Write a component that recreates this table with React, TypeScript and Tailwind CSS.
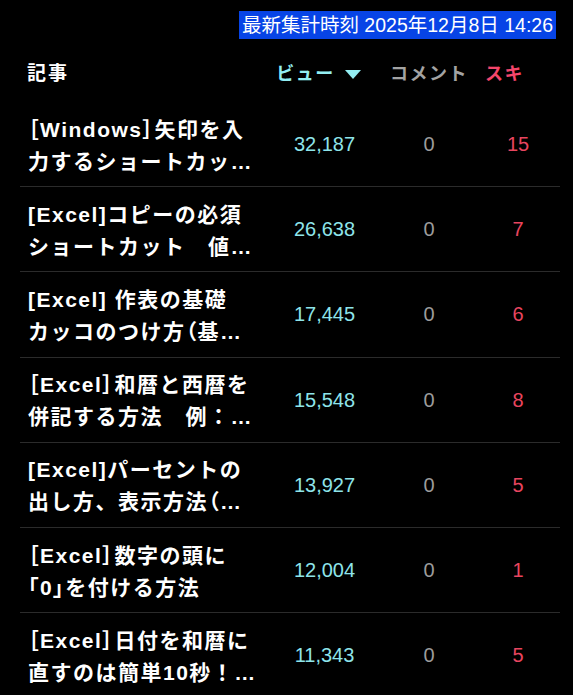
import React from 'react';

interface Row {
  lines: [string, string];
  views: string;
  comments: string;
  likes: string;
}

const rows: Row[] = [
  { lines: ['［Windows］矢印を入', '力するショートカッ…'], views: '32,187', comments: '0', likes: '15' },
  { lines: ['[Excel]コピーの必須', 'ショートカット　値…'], views: '26,638', comments: '0', likes: '7' },
  { lines: ['[Excel] 作表の基礎', 'カッコのつけ方（基…'], views: '17,445', comments: '0', likes: '6' },
  { lines: ['［Excel］和暦と西暦を', '併記する方法　例：…'], views: '15,548', comments: '0', likes: '8' },
  { lines: ['[Excel]パーセントの', '出し方、表示方法（…'], views: '13,927', comments: '0', likes: '5' },
  { lines: ['［Excel］数字の頭に', '「0」を付ける方法'], views: '12,004', comments: '0', likes: '1' },
  { lines: ['［Excel］日付を和暦に', '直すのは簡単10秒！…'], views: '11,343', comments: '0', likes: '5' },
];

// brackets are set proportional, like the original page
const Line = ({ text }: { text: string }) => {
  const parts = text.split(/([［］「」（）])/);
  return (
    <span className="block whitespace-nowrap">
      {parts.map((p, i) =>
        /^[［］「」（）]$/.test(p) ? (
          <span key={i} className="[font-feature-settings:'palt']">
            {p}
          </span>
        ) : (
          <React.Fragment key={i}>{p}</React.Fragment>
        )
      )}
    </span>
  );
};

export default function App() {
  return (
    <div className="min-h-screen bg-black text-white font-['Liberation_Sans','Noto_Sans_CJK_JP',sans-serif]">
      <div className="flex justify-end pt-[11px] pr-[17px]">
        <div className="h-[28px] bg-[#0744e6] px-[3px] text-[19.5px] leading-[28px] text-white">
          最新集計時刻 2025年12月8日 14:26
        </div>
      </div>

      <div className="ml-[20px] w-[540px]">
        <div className="flex h-[63px] items-center pt-[8px] text-[18px] font-bold tracking-[1.5px]">
          <div className="w-[255px] pl-[7px] text-[19px] tracking-[2px]">記事</div>
          <div className="flex w-[99px] items-center justify-center pr-[12px] text-[#93eef2]">
            <span>ビュー</span>
            <svg className="ml-[10px]" width="16" height="9" viewBox="0 0 16 9">
              <path d="M0 0 H16 L8 9 Z" fill="#93eef2" />
            </svg>
          </div>
          <div className="w-[110px] text-center text-[#a3a3a3]">コメント</div>
          <div className="w-[68px] pr-[27px] text-center text-[#f4466b]">スキ</div>
        </div>

        {rows.map((r) => (
          <div
            key={r.views}
            className="flex h-[85.2px] items-center border-b border-[#2b2b2b]"
          >
            <div className="w-[255px] pl-[8px] pt-[3px] text-[21px] font-bold leading-[32px] tracking-[1.5px]">
              <Line text={r.lines[0]} />
              <Line text={r.lines[1]} />
            </div>
            <div className="w-[99px] text-center text-[20px] text-[#8ee4ea]">{r.views}</div>
            <div className="w-[110px] text-center text-[20px] text-[#9c9c9c]">{r.comments}</div>
            <div className="w-[68px] text-center text-[20px] text-[#e8455f]">{r.likes}</div>
          </div>
        ))}
      </div>
    </div>
  );
}
